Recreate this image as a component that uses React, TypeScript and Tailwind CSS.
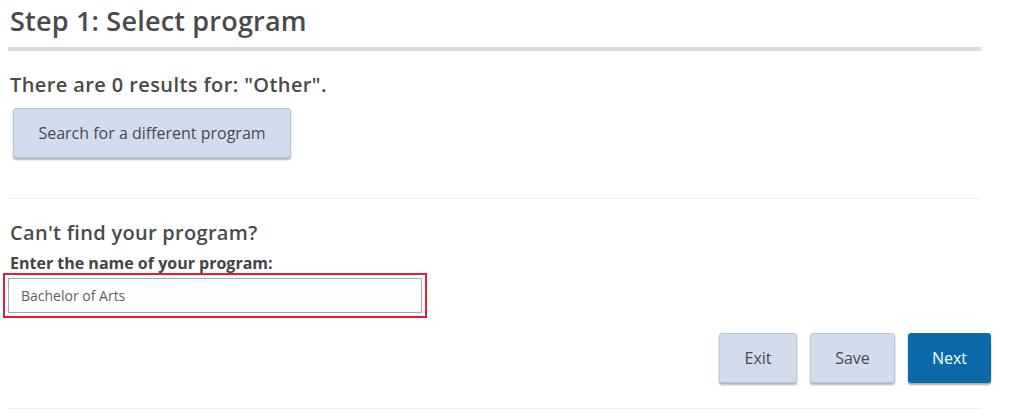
import React, { useState } from 'react';

const headFont = { fontFamily: '"Open Sans", sans-serif' };

export default function App() {
  const [programName, setProgramName] = useState('Bachelor of Arts');

  return (
    <div className="w-[1024px] h-[416px] bg-white overflow-hidden text-[#444]" style={{ fontFamily: '"Open Sans", sans-serif' }}>
      <div className="ml-[8px] w-[973px]">
        {/* Step title */}
        <h1 className="pl-[2px] pt-[3px] text-[27px] leading-[36px] font-semibold text-[#4a4a4a] tracking-[0.2px]" style={headFont}>
          Step 1: Select program
        </h1>
        <div className="mt-[8px] h-[4px] bg-[#dcdcdc]" />

        {/* Results */}
        <p className="pl-[2px] mt-[21px] text-[20px] leading-[26px] font-semibold text-[#4a4a4a] tracking-[0.4px]" style={headFont}>
          There are 0 results for: "Other".
        </p>
        <button className="ml-[5px] mt-[10px] w-[278px] h-[50px] rounded-[3px] border border-[#b9c6d4] bg-[#d1dded] text-[16px] text-[#4a4a4a] shadow-[0_2px_2px_rgba(0,0,0,0.3)]">
          Search for a different program
        </button>

        <div className="mt-[40px] h-px bg-[#ececec]" />

        {/* Manual entry */}
        <h2 className="pl-[2px] mt-[21px] text-[20px] leading-[26px] font-semibold text-[#4a4a4a] tracking-[0.3px]" style={headFont}>
          Can't find your program?
        </h2>
        <label className="block pl-[2px] mt-[8px] text-[16px] leading-[18px] font-bold text-[#444]">
          Enter the name of your program:
        </label>
        <div className="-ml-[5px] mt-[1px] w-[424px] h-[45px] border-2 border-[#e41e2b] p-[3px]">
          <input
            value={programName}
            onChange={(e) => setProgramName(e.target.value)}
            className="w-full h-full border border-[#a9a9a9] px-[12px] text-[14px] text-[#5f5f5f] outline-none"
          />
        </div>

        {/* Actions */}
        <div className="flex justify-end gap-[13px] mt-[15px] mr-[-10px]">
          <button className="w-[78px] h-[50px] rounded-[3px] border border-[#b9c6d4] bg-[#d1dded] text-[16px] text-[#4a4a4a] shadow-[0_2px_2px_rgba(0,0,0,0.3)]">
            Exit
          </button>
          <button className="w-[85px] h-[50px] rounded-[3px] border border-[#b9c6d4] bg-[#d1dded] text-[16px] text-[#4a4a4a] shadow-[0_2px_2px_rgba(0,0,0,0.3)]">
            Save
          </button>
          <button className="w-[83px] h-[50px] rounded-[3px] bg-[#0d6aa8] text-[16px] text-white shadow-[0_2px_2px_rgba(0,0,0,0.35)]">
            Next
          </button>
        </div>
        <div className="mt-[25px] h-px bg-[#ececec]" />
      </div>
    </div>
  );
}
